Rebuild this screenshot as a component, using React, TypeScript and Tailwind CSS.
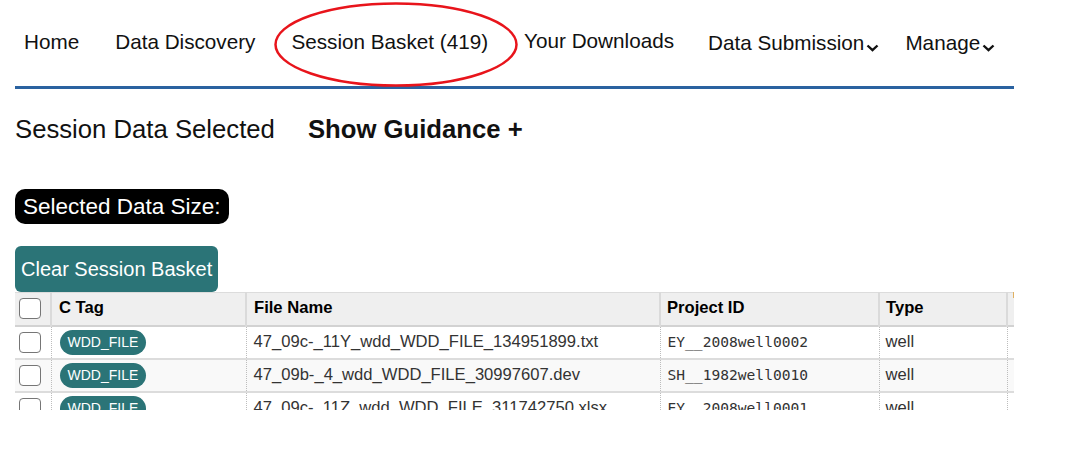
const navItems = [
  { label: "Home", ml: "ml-[24px]" },
  { label: "Data Discovery", ml: "ml-[36px]" },
  { label: "Session Basket (419)", ml: "ml-[36px]" },
  { label: "Your Downloads", ml: "ml-[36px]", up: true },
  { label: "Data Submission", ml: "ml-[34px]", menu: true },
  { label: "Manage", ml: "ml-[26px]", menu: true },
];

const rows = [
  { file: "47_09c-_11Y_wdd_WDD_FILE_134951899.txt", project: "EY__2008well0002", type: "well" },
  { file: "47_09b-_4_wdd_WDD_FILE_30997607.dev", project: "SH__1982well0010", type: "well" },
  { file: "47_09c-_11Z_wdd_WDD_FILE_311742750.xlsx", project: "EY__2008well0001", type: "well" },
];

function Chevron() {
  return (
    <svg width="13" height="8" viewBox="0 0 13 8" className="ml-[2px] mt-[13px] shrink-0">
      <path d="M1.5 1.5 L6.5 6.2 L11.5 1.5" fill="none" stroke="#111" strokeWidth="2.4" />
    </svg>
  );
}

function Box() {
  return <div className="w-[22px] h-[21px] rounded-[4px] border-[1.5px] border-[#767676] bg-white" />;
}

export default function App() {
  return (
    <div className="w-[1070px] h-[473px] bg-white overflow-hidden relative" style={{ fontFamily: "'Liberation Sans', Arial, sans-serif" }}>
      {/* Top nav */}
      <nav className="relative h-[86px] flex items-start pt-[30px] text-[20.7px] text-[#111]">
        {navItems.map((n) => (
          <div key={n.label} className={`${n.ml} flex items-start leading-[24px] whitespace-nowrap ${n.up ? "-mt-[1px]" : n.menu ? "mt-[1px]" : ""}`}>
            <span>{n.label}</span>
            {n.menu && <Chevron />}
          </div>
        ))}
        <svg className="absolute left-[273px] top-[1px]" width="246" height="87" viewBox="0 0 246 87">
          <ellipse cx="123" cy="43.5" rx="120.5" ry="41" fill="none" stroke="#e8141b" strokeWidth="2.5" />
        </svg>
      </nav>
      <div className="ml-[15px] w-[999px] h-[3px] bg-[#2a62a0]" />

      {/* Heading */}
      <div className="ml-[15px] mt-[26px] flex items-center text-[25.7px] leading-[28px] text-[#111]">
        <span>Session Data Selected</span>
        <span className="ml-[33px] font-bold">Show Guidance +</span>
      </div>

      <div className="ml-[15px] mt-[46px] inline-flex h-[35px] items-center rounded-[10px] bg-black px-[8px] text-[22.5px] text-white">
        Selected Data Size:
      </div>

      <div className="ml-[15px] mt-[22px] flex h-[46px] w-[203px] items-center rounded-[6px] bg-[#2b7477] pl-[6px] text-[20px] text-white">
        Clear Session Basket
      </div>

      {/* Table */}
      <div className="ml-[15px] w-[999px] h-[118px] overflow-hidden">
        <table className="table-fixed border-collapse w-[1100px] text-[16.6px]">
          <colgroup>
            <col className="w-[36px]" />
            <col className="w-[195px]" />
            <col className="w-[414px]" />
            <col className="w-[219px]" />
            <col className="w-[128px]" />
            <col className="w-[108px]" />
          </colgroup>
          <thead>
            <tr className="h-[33px] bg-[#efefef] border-t border-[#dcdcdc] border-b-2 border-b-[#d2d2d2]">
              <th className="pl-[4px] border-r-2 border-[#dadada]">
                <Box />
              </th>
              <th className="text-left font-bold pl-[7px] border-r-2 border-[#dadada] text-black">C Tag</th>
              <th className="text-left font-bold pl-[7px] border-r-2 border-[#dadada] text-black">File Name</th>
              <th className="text-left font-bold pl-[6px] border-r-2 border-[#dadada] text-black">Project ID</th>
              <th className="text-left font-bold pl-[6px] border-r-2 border-[#dadada] text-black">Type</th>
              <th className="text-left pl-[5px]">
                <span className="inline-block w-[4px] h-[8px] bg-[#e0b060] align-top mt-[-6px]" />
              </th>
            </tr>
          </thead>
          <tbody>
            {rows.map((r, i) => (
              <tr key={r.file} className={`h-[33px] border-b-2 border-[#dcdcdc] ${i === 1 ? "bg-[#f9f9f9]" : "bg-white"}`}>
                <td className="pl-[4px] border-r border-dotted border-[#bdbdbd]">
                  <Box />
                </td>
                <td className="pl-[8px] border-r border-dotted border-[#bdbdbd]">
                  <span className="inline-flex h-[25px] items-center rounded-full bg-[#2b7477] px-[8px] text-[14px] text-white">
                    WDD_FILE
                  </span>
                </td>
                <td className="pl-[7px] text-[#333] border-r border-dotted border-[#bdbdbd] whitespace-nowrap">{r.file}</td>
                <td
                  className="pl-[7px] text-[14.6px] text-[#333] border-r border-dotted border-[#bdbdbd] whitespace-nowrap"
                  style={{ fontFamily: "'DejaVu Sans Mono', monospace" }}
                >
                  {r.project}
                </td>
                <td className="pl-[6px] text-[#333] border-r border-dotted border-[#bdbdbd]">{r.type}</td>
                <td />
              </tr>
            ))}
          </tbody>
        </table>
      </div>
    </div>
  );
}
